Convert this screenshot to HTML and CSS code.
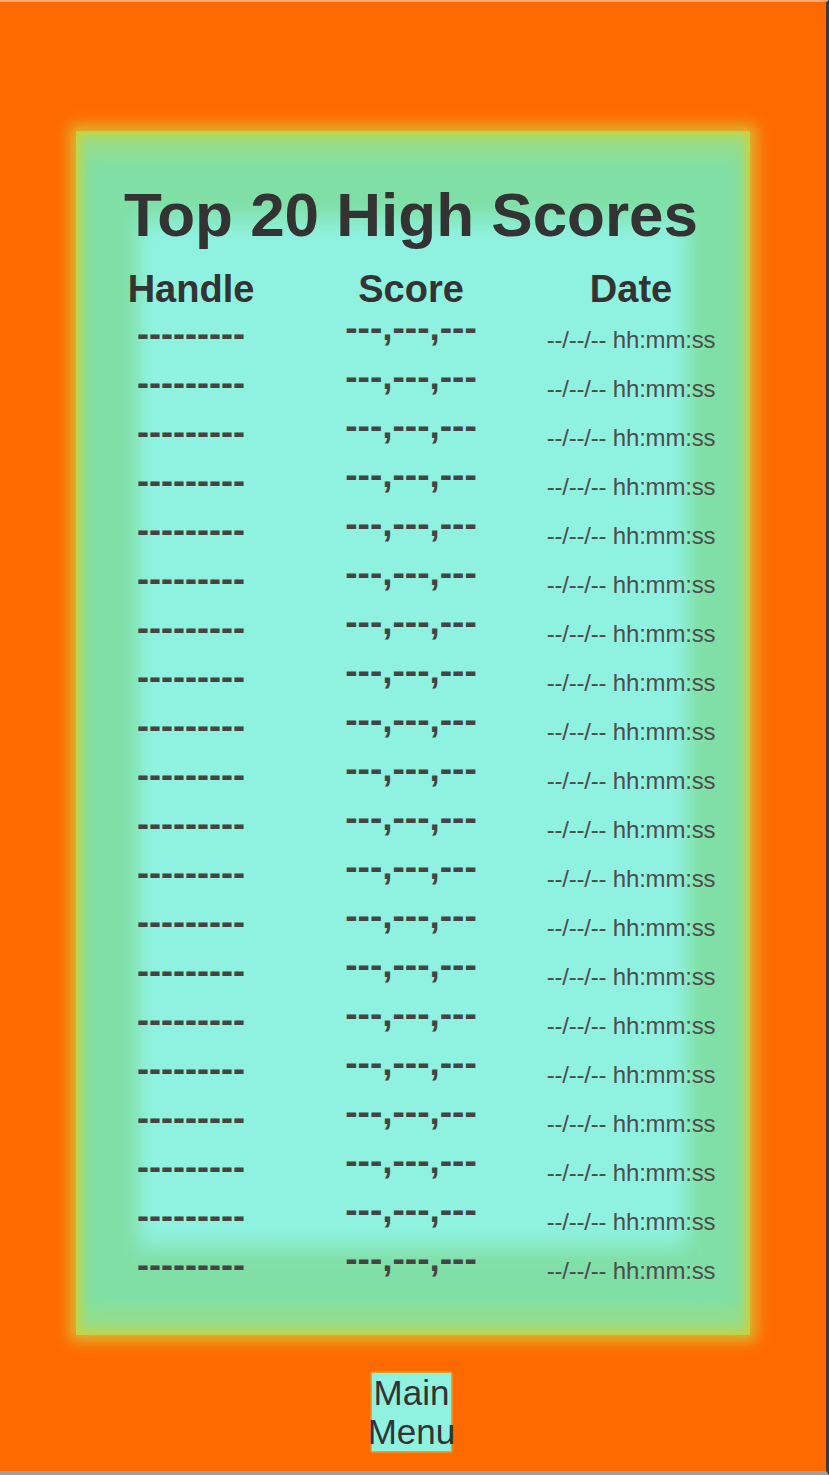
FILE: index.html
```html
<!DOCTYPE html>
<html lang="en">

<head>
    <meta charset="UTF-8">
    <meta name="viewport" content="width=device-width, initial-scale=1.0">
    <title>High Scores</title>
    <link rel="stylesheet" href="styles.css">
</head>

<body>
    <div class="screen">
        <div class="panel">
            <h1 class="title">Top 20 High Scores</h1>
            <div class="row head">
                <span>Handle</span>
                <span>Score</span>
                <span>Date</span>
            </div>
            <div id="scoreList"></div>
        </div>
        <div class="menu">
            <button class="menu-btn"><span>Main Menu</span></button>
        </div>
    </div>
    <script>
        // 20 empty slots until real scores come in
        const scoreList = document.getElementById('scoreList');
        for (let i = 0; i < 20; i++) {
            const row = document.createElement('div');
            row.className = 'row entry';
            row.innerHTML =
                '<span class="handle">---------</span>' +
                '<span class="score">---,---,---</span>' +
                '<span class="date">--/--/-- hh:mm:ss</span>';
            scoreList.appendChild(row);
        }
    </script>
</body>

</html>
```

FILE: styles.css
```css
body {
    margin: 0;
    font-family: "Liberation Sans", Arial, sans-serif;
    color: #333;
}

.screen {
    box-sizing: border-box;
    height: 1475px;
    padding-top: 129px;
    background: #ff6a00;
    border-top: 2px solid #f7ab7a;
    border-right: 3px solid #3b3b3b;
    border-bottom: 4px solid #a0a0a0;
    overflow: hidden;
}

.panel {
    box-sizing: border-box;
    width: 674px;
    height: 1204px;
    margin-left: 76px;
    padding: 49px 4px 0 0;
    background: #8ff2e0;
    box-shadow:
        0 0 14px 6px rgba(214, 196, 58, 0.9),
        inset 0 0 10px 4px #c9d23a,
        inset 0 22px 22px 0 #9bde84,
        inset 0 -22px 22px 0 #9bde84,
        inset 0 33px 22px 56px #80dfa6,
        inset 0 -33px 22px 56px #80dfa6;
}

.title {
    margin: 0 0 19px;
    font-size: 62px;
    line-height: 70px;
    font-weight: bold;
    text-align: center;
}

.row {
    display: grid;
    grid-template-columns: repeat(3, 220px);
    justify-content: center;
    text-align: center;
    white-space: nowrap;
}

.head {
    font-size: 38px;
    line-height: 40px;
    font-weight: bold;
}

.entry {
    height: 49px;
    align-items: start;
    color: #444;
}

.handle {
    font-size: 36px;
    line-height: 49px;
    font-weight: bold;
}

.score {
    font-size: 37px;
    line-height: 37px;
    font-weight: bold;
}

.date {
    padding-top: 6px;
    font-size: 24px;
    line-height: 49px;
    letter-spacing: -0.2px;
    color: #4d4d4d;
}

.menu {
    display: flex;
    justify-content: center;
    padding: 38px 3px 0 0;
}

.menu-btn {
    width: 79px;
    height: 78px;
    padding: 0;
    border: none;
    background: #8ff2e0;
    box-shadow: 0 0 2px 1px #d6c23a;
    font-family: inherit;
    font-size: 35px;
    line-height: 39px;
    color: #333;
}

.menu-btn span {
    display: block;
    margin: 0 -10px;
    text-align: center;
}
```
